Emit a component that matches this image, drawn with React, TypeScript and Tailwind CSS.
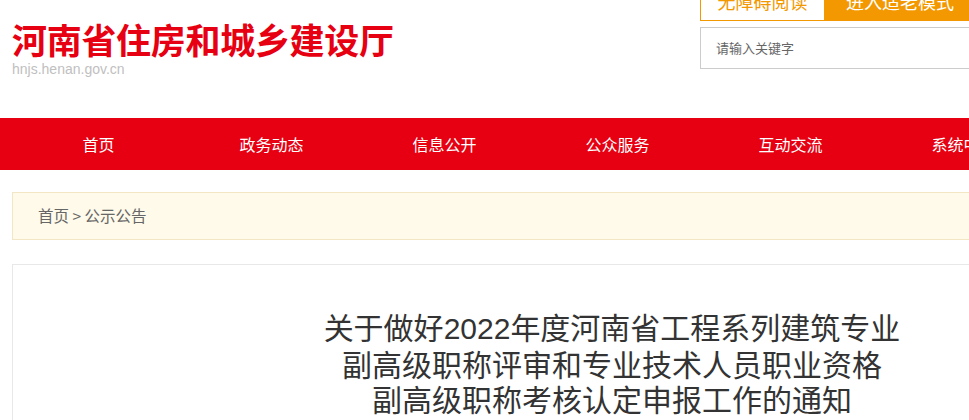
import React from 'react';

const navItems = ['首页', '政务动态', '信息公开', '公众服务', '互动交流', '系统中心', '专题专栏'];

function App() {
  return (
    <div
      className="w-[1224px] bg-white overflow-hidden"
      style={{ fontFamily: '"Microsoft YaHei", "Noto Sans CJK SC", "Noto Sans", sans-serif' }}
    >
      {/* Header */}
      <header className="h-[118px] w-[1200px] ml-[12px] flex justify-between">
        <div className="pt-[20px]">
          <h1 className="text-[35px] leading-[38px] font-bold text-[#e60012] tracking-[-0.3px]">
            河南省住房和城乡建设厅
          </h1>
          <p className="mt-[4px] text-[14px] leading-[14px] text-[#c0c0c0] font-['Liberation_Sans',sans-serif]">
            hnjs.henan.gov.cn
          </p>
        </div>

        {/* Right: accessibility + search */}
        <div className="w-[512px] -mt-[19px]">
          <div className="flex h-[40px]">
            <button className="w-[125px] h-[40px] border border-[#f39800] text-[#f39800] text-[18px] bg-white">
              无障碍阅读
            </button>
            <button className="w-[150px] h-[40px] bg-[#f39800] text-white text-[18px]">
              进入适老模式
            </button>
          </div>
          <div className="mt-[6px] h-[42px] border border-[#cccccc] flex items-center px-[15px]">
            <span className="text-[13px] text-[#666666]">请输入关键字</span>
          </div>
        </div>
      </header>

      {/* Nav */}
      <nav className="h-[52px] bg-[#e60012]">
        <ul className="ml-[12px] flex h-full items-center">
          {navItems.map((item) => (
            <li key={item} className="w-[173px] text-center text-white text-[16px]">
              {item}
            </li>
          ))}
        </ul>
      </nav>

      {/* Breadcrumb */}
      <div className="ml-[12px] w-[1200px] mt-[22px] h-[48px] bg-[#fffaea] border border-[#f1e7c6] flex items-center pl-[25px]">
        <span className="text-[15.5px] text-[#666666]">首页 &gt; 公示公告</span>
      </div>

      {/* Article */}
      <div className="ml-[12px] w-[1200px] mt-[24px] h-[200px] border border-[#e8e8e8] pt-[44px]">
        <h2 className="text-[30px] leading-[35px] text-[#333333] text-center">
          关于做好<span className="font-['Liberation_Sans',sans-serif]">2022</span>年度河南省工程系列建筑专业
          <br />
          副高级职称评审和专业技术人员职业资格
          <br />
          副高级职称考核认定申报工作的通知
        </h2>
      </div>
    </div>
  );
}

export default App;
